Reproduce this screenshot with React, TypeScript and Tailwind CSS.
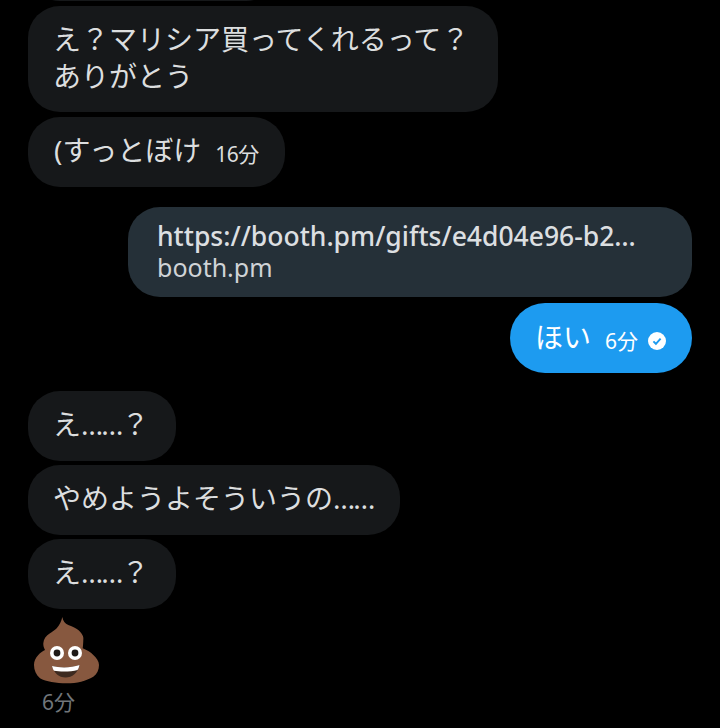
const FONT = "font-['Noto_Sans','Noto_Sans_CJK_JP',sans-serif]";

function Bubble({ children, className = "" }: { children: React.ReactNode; className?: string }) {
  return (
    <div className={`rounded-[32px] bg-[#16181a] py-[15px] text-[28px] leading-[37px] text-[#dcdedf] ${className}`}>
      {children}
    </div>
  );
}

function Dots() {
  return <span className="tracking-[-2px]">……</span>;
}

function Poop() {
  return (
    <svg width="68" height="68" viewBox="0 0 68 68" aria-hidden="true">
      <path
        d="M29.3 0 C30 4 32 6.5 35.3 8 C40 10 43 11 45.3 13 C49 16 51 20 50.3 23 C50.2 26 50 29 49.7 31.3 C54 33 58 35.5 60.3 38 C63.5 41 66 44 66 48 C66 53 64 57 60.3 59.7 C53 64 44 66.3 33.7 66.3 C23 66.3 13 64.5 7 61.3 C3 58 1 53 1 48 C1 44 2.5 41 5.3 38 C7 36 9.5 34 12 33 C10.8 31 10.2 28.5 10.3 26.3 C10.6 22 13 18.5 17 16.3 C19 15 21.5 13.5 23.7 11.3 C26.5 8 28.5 4 29.3 0 Z"
        fill="#87583f"
      />
      <circle cx="24" cy="36" r="7" fill="#ffffff" />
      <circle cx="24" cy="36" r="3.4" fill="#1f1a17" />
      <circle cx="42" cy="36" r="7" fill="#ffffff" />
      <circle cx="42" cy="36" r="3.4" fill="#1f1a17" />
      <path d="M19 49 C27 51 38 51 46.5 48 C45 56 39 60.5 32.5 60.5 C26 60.5 21 56 19 49 Z" fill="#3d2a20" />
      <path d="M19 49 C27 51 38 51 46.5 48 C46 50 45.5 52 44.5 53 C38 55 27 55 21 53.8 C20 52.5 19.5 50.5 19 49 Z" fill="#ffffff" />
    </svg>
  );
}

export default function App() {
  return (
    <div className={`h-[728px] w-[720px] overflow-hidden bg-black ${FONT}`}>
      <div className="-mt-[69px] flex flex-col items-start px-[28px]">
        <Bubble className="h-[70px] w-[250px]"> </Bubble>
        <Bubble className="mt-[5px] h-[106px] w-[470px] pl-[25px]">
          え？マリシア買ってくれるって？
          <br />
          ありがとう
        </Bubble>
        <Bubble className="mt-[5px] h-[70px] w-[257px] pl-[26px]">
          <span className="flex items-center">
            (すっとぼけ
            <span className="ml-[14px] mt-[6px] text-[21px] leading-[24px] tracking-[-0.5px]">16分</span>
          </span>
        </Bubble>

        <div className="mt-[20px] ml-[100px] h-[90px] w-[564px] rounded-[32px] bg-[#253038] px-[29px] py-[14px] leading-[31px] text-[#dcdfe1]">
          <div className="text-[26.5px] font-medium">https://booth.pm/gifts/e4d04e96-b2…</div>
          <div className="text-[25px] font-normal text-[#cfd3d6]">booth.pm</div>
        </div>

        <div className="mt-[6px] flex h-[70px] w-[182px] items-center self-end rounded-[35px] bg-[#1d9bf0] pl-[25px] text-white">
          <span className="-mt-[2px] text-[28px] leading-[36px]">ほい</span>
          <span className="ml-[14px] mt-[6px] text-[21px] leading-[24px]">6分</span>
          <svg className="ml-[10px] mt-[6px]" width="18" height="18" viewBox="0 0 18 18" aria-hidden="true">
            <circle cx="9" cy="9" r="9" fill="#ffffff" />
            <path d="M5.4 9.4 L7.9 11.8 L12.6 6.6" fill="none" stroke="#1d9bf0" strokeWidth="1.9" />
          </svg>
        </div>

        <Bubble className="mt-[18px] h-[70px] pl-[25px] pr-[27px]">
          え<Dots />？
        </Bubble>
        <Bubble className="mt-[4px] h-[70px] pl-[25px] pr-[27px]">
          やめようよそういうの<Dots />
        </Bubble>
        <Bubble className="mt-[4px] h-[70px] pl-[25px] pr-[27px]">
          え<Dots />？
        </Bubble>

        <div className="mt-[8px] ml-[5px]">
          <Poop />
        </div>
        <div className="ml-[14px] mt-[4px] text-[21px] leading-[26px] text-[#71767b]">6分</div>
      </div>
    </div>
  );
}
